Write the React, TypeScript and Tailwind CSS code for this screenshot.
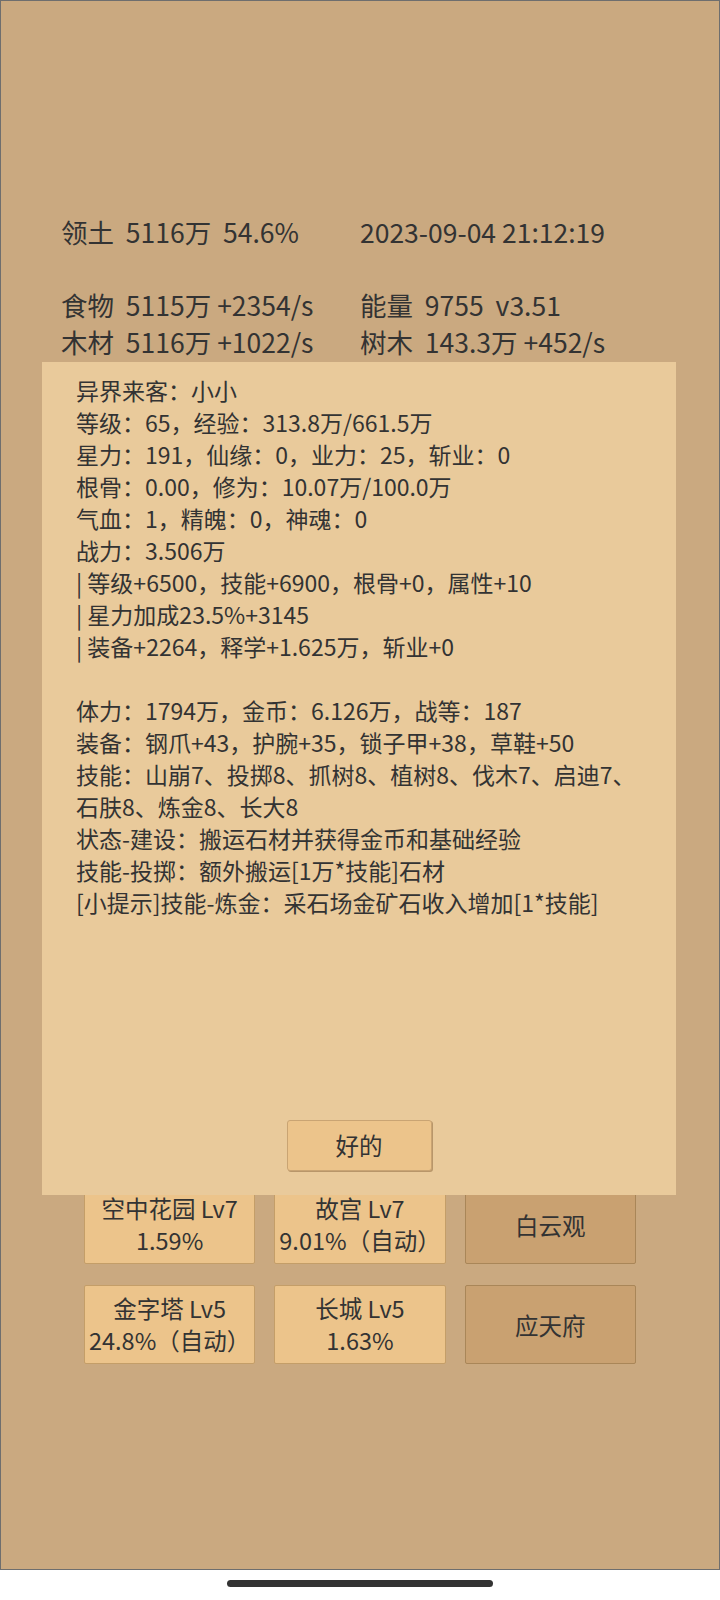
import React from 'react'

const font = { fontFamily: '"Noto Sans CJK SC", "Noto Sans", sans-serif' }

const stats: [string, string][] = [
  ['领土  5116万  54.6%', '2023-09-04 21:12:19'],
  ['', ''],
  ['食物  5115万 +2354/s', '能量  9755  v3.51'],
  ['木材  5116万 +1022/s', '树木  143.3万 +452/s'],
]

const lines = [
  '异界来客：小小',
  '等级：65，经验：313.8万/661.5万',
  '星力：191，仙缘：0，业力：25，斩业：0',
  '根骨：0.00，修为：10.07万/100.0万',
  '气血：1，精魄：0，神魂：0',
  '战力：3.506万',
  '| 等级+6500，技能+6900，根骨+0，属性+10',
  '| 星力加成23.5%+3145',
  '| 装备+2264，释学+1.625万，斩业+0',
  '',
  '体力：1794万，金币：6.126万，战等：187',
  '装备：钢爪+43，护腕+35，锁子甲+38，草鞋+50',
  '技能：山崩7、投掷8、抓树8、植树8、伐木7、启迪7、',
  '石肤8、炼金8、长大8',
  '状态-建设：搬运石材并获得金币和基础经验',
  '技能-投掷：额外搬运[1万*技能]石材',
  '[小提示]技能-炼金：采石场金矿石收入增加[1*技能]',
]

type Building = { name: string; info?: string; done?: boolean }

const buildings: Building[] = [
  { name: '空中花园 Lv7', info: '1.59%' },
  { name: '故宫 Lv7', info: '9.01%（自动）' },
  { name: '白云观', done: true },
  { name: '金字塔 Lv5', info: '24.8%（自动）' },
  { name: '长城 Lv5', info: '1.63%' },
  { name: '应天府', done: true },
]

export default function App() {
  return (
    <div className="w-[720px] h-[1600px] bg-white text-[#333333]" style={font}>
      <div className="relative h-[1570px] border border-[#6e6e6e] bg-[#caa980]">
        <div className="pt-[213px] pl-[60px] text-[26.5px] leading-[36.5px]">
          {stats.map(([l, r], i) => (
            <div key={i} className="flex h-[36.5px]">
              <div className="w-[299px] whitespace-pre">{l}</div>
              <div className="whitespace-pre">{r}</div>
            </div>
          ))}
        </div>

        <div className="mt-[825px] ml-[83px] w-[552px] grid grid-cols-3 gap-x-[19px] gap-y-[21px] text-[23.5px] leading-[32px]">
          {buildings.map((b) => (
            <div
              key={b.name}
              className={
                b.done
                  ? 'h-[79px] flex items-center justify-center rounded-[2px] border border-[#a98658] bg-[#c9a171]'
                  : 'h-[79px] flex flex-col items-center pt-[6px] rounded-[2px] border border-[#c49e68] bg-[#ecc48b] whitespace-nowrap'
              }
            >
              <div>{b.name}</div>
              {b.info && <div>{b.info}</div>}
            </div>
          ))}
        </div>

        <div className="absolute left-[41px] top-[361px] w-[634px] h-[833px] bg-[#e9ca9b] flex flex-col">
          <div className="pl-[34px] pt-[12px] text-[23px] leading-[32px]">
            {lines.map((t, i) => (
              <div key={i} className="h-[32px] whitespace-pre">{t}</div>
            ))}
          </div>
          <div className="mt-auto mb-[24px] flex justify-center">
            <button className="w-[145px] h-[51px] rounded-[3px] border border-[#c9a473] bg-[#ecc48b] text-[23.5px] text-[#333333] shadow-[1px_1px_0_#b8966a]">
              好的
            </button>
          </div>
        </div>
      </div>
      <div className="mx-auto mt-[10px] w-[266px] h-[7px] rounded-full bg-[#333333]" />
    </div>
  )
}
